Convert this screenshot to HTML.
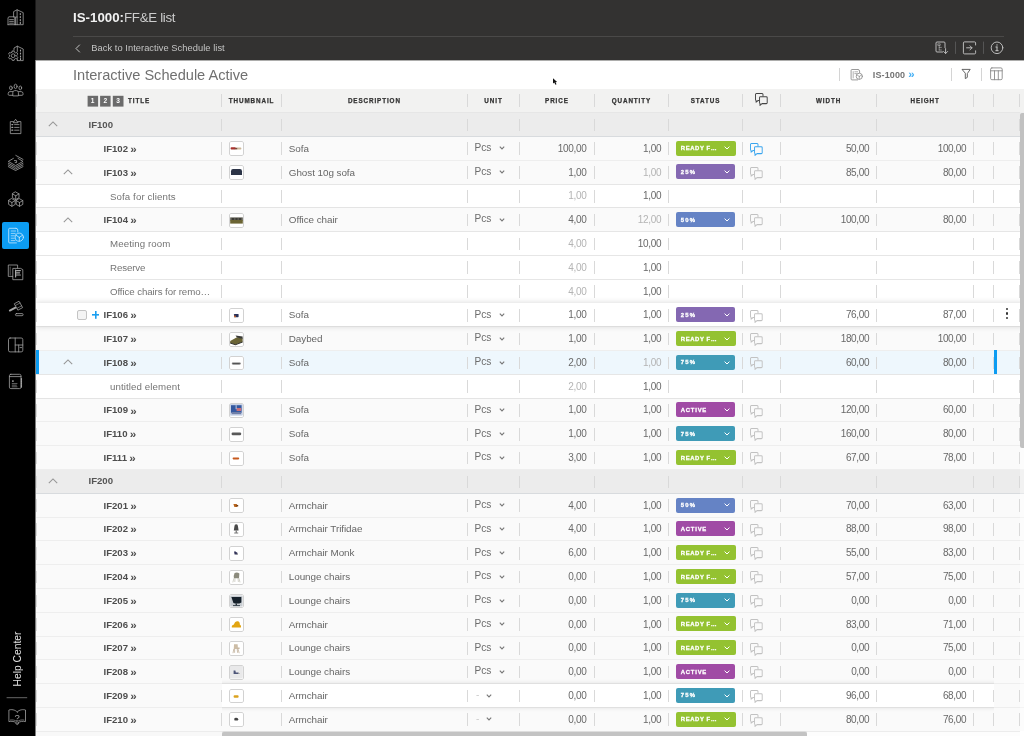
<!DOCTYPE html>
<html><head><meta charset="utf-8"><title>IS-1000: FF&amp;E list</title>
<style>
*{box-sizing:border-box;margin:0;padding:0}
html,body{width:1024px;height:736px;overflow:hidden;background:#fff;font-family:"Liberation Sans",sans-serif;}
body{position:relative}
body>*{will-change:transform}
#side{position:absolute;left:0;top:0;width:35px;height:736px;background:#000}
#sico{position:absolute;left:0;top:0}
#tico{position:absolute;left:0;top:0;z-index:5}
#side .act{position:absolute;left:2px;top:222px;width:27px;height:27px;background:#0c9cf2;border-radius:2px}
#help{position:absolute;left:-13.2px;top:652px;width:62px;height:14px;transform:rotate(-90deg);transform-origin:center;color:#e2e2e2;font-size:10.3px;text-align:center;line-height:14px;white-space:nowrap}
#top{position:absolute;left:36px;top:0;width:988px;height:61px;background:#333231}
#top .ttl{position:absolute;left:37px;top:9.4px;font-size:13.3px;color:#fff;white-space:nowrap;line-height:18px}
#top .ttl b{font-weight:700;color:#f2f2f2}
#top .ttl span{font-weight:400;color:#cdcdcd;letter-spacing:-0.3px}
#top .hr{position:absolute;left:37px;top:35.6px;width:930.5px;height:1px;background:#4a4948}
#top .back{position:absolute;left:55.3px;top:41.6px;font-size:9.3px;color:#c4c4c4;line-height:12px;white-space:nowrap;letter-spacing:.05px}
#sub{position:absolute;left:36px;top:61px;width:988px;height:28px;background:#fff}
#sub .h{position:absolute;left:37px;top:5px;font-size:14.6px;line-height:18px;color:#707070;white-space:nowrap;letter-spacing:0}
#sub .is{position:absolute;left:836.8px;top:6.8px;font-size:9px;letter-spacing:.12px;font-weight:700;color:#737373;line-height:12px;white-space:nowrap}
#sub .is b{color:#45b0f5;font-size:11.5px;font-weight:700;margin-left:.5px}
.vs{position:absolute;width:1px;background:#d4d4d4}
#thead{position:absolute;left:36px;top:89px;width:988px;height:23.2px;background:#f2f2f1}
#thead .hl{position:absolute;top:6.9px;font-size:6.3px;font-weight:700;letter-spacing:.9px;color:#333;line-height:9px;white-space:nowrap;-webkit-text-stroke:.25px #333}
#thead .hl.c{text-align:center}
#thead .lv{position:absolute;top:7px;width:10.4px;height:10.4px;background:#6a6a6a;color:#fff;font-size:6.5px;font-weight:700;text-align:center;line-height:10.4px}
.sep{position:absolute;top:6.5px;width:1px;height:12.6px;background:#d9d9d9}
#thead .sep{top:5px}
.row{position:absolute;left:36px;width:988px;height:23.79px;box-shadow:inset 0 1px 0 #eeeeee;white-space:nowrap}
.row.itm{background:#fafafa}
.row.sub{background:#fff;box-shadow:inset 0 1px 0 #e6e6e6}
.row.sub+.row.itm{box-shadow:inset 0 1px 0 #e4e4e4}
.row.ag{box-shadow:inset 0 1px 0 #d8dbde}
.row.first{box-shadow:inset 0 1px 0 #e6e6e6}
.row.grp{background:#ececec}
.row.sel{background:#eef7fd}
#rows .row.hov{background:#fff;box-shadow:0 0 6px rgba(0,0,0,.17);z-index:2}
.chu{position:absolute;top:9.3px}
.gt{position:absolute;left:52.5px;top:6.35px;font-size:9.6px;font-weight:700;color:#555;line-height:12px}
.it{position:absolute;left:67.5px;top:6.75px;font-size:9.6px;font-weight:700;color:#4e4e4e;line-height:12px}
.it .rq{font-weight:700;font-size:11.6px;line-height:10px;color:#4e4e4e;margin-left:-.4px;position:relative;top:1.1px}
.stt{position:absolute;left:74px;top:7.25px;font-size:9.7px;letter-spacing:.1px;color:#747474;line-height:12px}
.th{position:absolute;left:193.3px;top:5.5px;width:14.8px;height:14.8px;border-radius:2px;background:#fff;overflow:hidden}
.th svg{position:absolute;left:0;top:0}
.th:after{content:"";position:absolute;left:0;top:0;right:0;bottom:0;border:1px solid #d2d2d2;border-radius:2px}
.ds{position:absolute;left:252.8px;top:6.75px;font-size:9.9px;letter-spacing:-.06px;color:#666;line-height:12px}
.un{position:absolute;left:438.5px;top:6.10px;font-size:10.1px;color:#6c6c6c;line-height:12px}
.un.dash{color:#ccc;left:440px}
.uc{position:absolute;left:462.6px;top:10.5px}
.uc2{left:450px}
.num{position:absolute;top:6.80px;font-size:10px;letter-spacing:-.32px;line-height:12px}
.num.dark{color:#696969}
.num.grey{color:#b4b4b4}
.bd{position:absolute;left:639.5px;top:4.7px;height:15px;border-radius:2px;color:#fff}
.bd span{position:absolute;left:5.3px;top:3.65px;font-size:5.9px;font-weight:700;line-height:8px;-webkit-text-stroke:.3px #fff}
.bd svg{position:absolute;left:48.5px;top:5.8px}
.cmt{position:absolute;left:714px;top:7.0px}
.hcmt{position:absolute;left:718.8px;top:3.7px}
.cb{position:absolute;left:41.2px;top:7.2px;width:10px;height:10px;border:1px solid #c4c4c4;border-radius:2px;background:#f4f4f4}
.plus{position:absolute;left:55.6px;top:8.6px;width:7.6px;height:7.6px;background:linear-gradient(#1a9ef0,#1a9ef0) 50% 50%/100% 1.6px no-repeat,linear-gradient(#1a9ef0,#1a9ef0) 50% 50%/1.6px 100% no-repeat}
.dots{position:absolute;left:969.7px;top:5.3px;width:3px}
.dots i{display:block;width:2.2px;height:2.2px;border-radius:50%;background:#333;margin-bottom:2.4px}
.lbar{position:absolute;left:0;top:0;width:2.5px;height:23.79px;background:#0c9cf2}
.rbar{position:absolute;left:958.2px;top:0;width:2.5px;height:23.79px;background:#0c9cf2}
.whtclip{position:absolute;left:185.5px;top:-7px;width:772px;height:38px;overflow:hidden}
.whtbg{position:absolute;left:-10px;top:8.3px;width:792px;height:22.6px;background:#fff;box-shadow:0 0 5px rgba(0,0,0,.14)}
.row.wht{z-index:1}
#vsb{position:absolute;left:1020px;top:112px;width:4px;height:624px;background:rgba(255,255,255,.35);z-index:4}
#vsb i{position:absolute;left:.4px;top:1px;width:4px;height:335px;background:#c1c1c1;border-radius:2px 0 0 2px}
#hsb{position:absolute;left:221.7px;top:731px;width:798px;height:5px;background:linear-gradient(#ececec 0 1px,#fdfdfd 1px)}
#hsb i{position:absolute;left:0;top:1px;width:585px;height:4px;background:#c3c3c3;border-radius:2px 2px 0 0;box-shadow:0 -1px 0 #dedede}
</style></head><body>
<div id="side">
<div class="act"></div>
<svg id="sico" width="36" height="736" viewBox="0 0 36 736" fill="none" stroke="#a6a6a6" stroke-width="0.78" stroke-linejoin="round" stroke-linecap="round">
<!-- 1 buildings -->
<g>
<path d="M13.6 17 V11.6 L17.1 9.8 L23.2 12.6 V24.7 H8"/>
<path d="M17.1 9.8 V24.7"/>
<path d="M8 24.7 V17.6 L9 16.8 H14.8 V24.7"/>
<path d="M15.4 24.7 V17 H17.1"/>
<path d="M9.6 19.6 H13.4 M9.6 21.4 H13.4 M9.6 23.2 H13.4"/>
<path d="M20.3 13.6 V14.6 M20.3 16.6 V17.6 M20.3 19.6 V20.6 M20.3 22.4 V23.4" stroke-width="1.1"/>
</g>
<!-- 2 gear building -->
<g>
<path d="M14 50.2 V48 L17.3 46.2 L23.2 49 V60.6 H17.5"/>
<path d="M17.3 46.2 V51.5 M17.3 59 V60.6"/>
<path d="M20.5 50 V51 M20.5 53 V54 M20.5 56 V57 M20.5 58.6 V59.4" stroke-width="1.1"/>
<circle cx="13.2" cy="55.7" r="1.9"/>
<path d="M12.3 51 H14.1 L14.5 52.3 L15.6 52.9 L16.9 52.5 L17.8 54.1 L16.8 55 V56.3 L17.8 57.3 L16.9 58.9 L15.6 58.5 L14.5 59.1 L14.1 60.4 H12.3 L11.9 59.1 L10.8 58.5 L9.5 58.9 L8.6 57.3 L9.6 56.3 V55 L8.6 54.1 L9.5 52.5 L10.8 52.9 L11.9 52.3 Z"/>
</g>
<!-- 3 people -->
<g>
<ellipse cx="15.6" cy="86.4" rx="1.5" ry="2.2"/>
<ellipse cx="10.9" cy="87.9" rx="1.35" ry="1.9"/>
<ellipse cx="20.3" cy="87.9" rx="1.35" ry="1.9"/>
<path d="M12.8 95.5 V92.6 Q12.8 90.6 14.8 90.6 H16.4 Q18.4 90.6 18.4 92.6 V95.5 Z"/>
<path d="M12.6 91.6 H10 Q8.2 91.8 8.2 93.4 V94.4 Q8.2 95.3 9.2 95.3 H12.6"/>
<path d="M18.6 91.6 H21.2 Q23 91.8 23 93.4 V94.4 Q23 95.3 22 95.3 H18.6"/>
</g>
<!-- 4 clipboard -->
<g>
<path d="M13.4 121.6 H10.3 V133.6 H20.9 V121.6 H17.8"/>
<path d="M13.4 122.4 L15.6 119.3 L17.8 122.4 Z"/>
<path d="M14.6 124.6 H19 M14.6 127.4 H19 M14.6 130.2 H19"/>
<path d="M11.9 124.6 H12.7 M11.9 127.4 H12.7 M11.9 130.2 H12.7" stroke-width="1.3"/>
</g>
<!-- 5 layers -->
<g>
<path d="M13.4 158.4 L8.3 161.4 L15.6 165.6 L23 161.4 L18 158.4"/>
<path d="M15.8 155.4 L23 159.4"/>
<path d="M14.4 160.6 H16.6 V162.6 H15.2" stroke-width="0.8"/>
<path d="M8.3 163.2 L15.6 167.3 L23 163.2"/>
<path d="M8.3 164.9 L15.6 168.9 L23 164.9"/>
<path d="M8.3 166.6 L15.6 170.5 L23 166.6"/>
</g>
<!-- 6 cubes -->
<g>
<path d="M15.7 192 L19 193.9 V197.7 L15.7 199.6 L12.4 197.7 V193.9 Z M12.4 193.9 L15.7 195.8 L19 193.9 M15.7 195.8 V199.6"/>
<path d="M11.9 198.7 L15.2 200.6 V204.4 L11.9 206.3 L8.6 204.4 V200.6 Z M8.6 200.6 L11.9 202.5 L15.2 200.6 M11.9 202.5 V206.3"/>
<path d="M19.5 198.7 L22.8 200.6 V204.4 L19.5 206.3 L16.2 204.4 V200.6 Z M16.2 200.6 L19.5 202.5 L22.8 200.6 M19.5 202.5 V206.3"/>
</g>
<!-- 7 active doc + cube -->
<g stroke="#cfeafc">
<path d="M16 228.3 H9.6 Q8.7 228.3 8.7 229.2 V242 Q8.7 242.9 9.6 242.9 H16.4 M17.8 232 V230 Q17.8 228.3 16 228.3"/>
<path d="M11.2 231 H15.6 M11.2 233.4 H15.2 M11.2 235.8 H14.4 M11.2 238.2 H14.4 M11.2 240.6 H15" stroke-width="0.7"/>
<circle cx="19.3" cy="237.2" r="4.1" fill="#0c9cf2"/>
<path d="M19.3 237.4 V241.2 M19.3 237.4 L16 235.2 M19.3 237.4 L22.6 235.2"/>
</g>
<!-- 8 docs -->
<g>
<path d="M12.6 276.4 H8.3 V265 H17.6 V268"/>
<path d="M10.2 267 V275" stroke-width="0.6" stroke="#888"/>
<path d="M13.2 268.4 H20.6 L22.8 269.6 V279.7 H13.2 Z" />
<path d="M15.6 270.2 V277 M16.6 270.6 H20.4 M16.6 272.8 H19.6 M16.6 275 H20.4" stroke-width="1.2"/>
</g>
<!-- 9 gavel -->
<g>
<path d="M14.6 303.6 L19 301.2 L22.6 307.6 L18.2 310 Z"/>
<path d="M15.6 305.4 L20 303 M17.2 308.2 L21.6 305.8" stroke-width="0.6"/>
<path d="M15.4 307.6 L9.8 310.6" stroke-width="1.8"/>
<rect x="15.4" y="313.6" width="7.7" height="2.1" rx="1"/>
</g>
<!-- 10 layout -->
<g>
<rect x="8.5" y="338" width="14.3" height="13.9" rx="1.6"/>
<path d="M15.2 338 V351.9 M15.2 345 H22.8 M18.7 345 V351.9 M20 347.6 H21.6" />
</g>
<!-- 11 notebook -->
<g>
<rect x="9.4" y="374.3" width="11.6" height="14.3" rx="1.4"/>
<path d="M9.4 376.6 H21"/>
<path d="M21.4 378.6 V379.4 M21.4 380.6 V381.4 M21.4 382.6 V383.4 M21.4 384.6 V385.4 M21.4 386.4 V387" stroke-width="1.3"/>
<rect x="12.2" y="380.4" width="1.4" height="1.4" fill="#c4c4c4" stroke="none"/>
<path d="M12.2 383.6 H17 M12.2 385.2 H16.4 M12.2 386.8 H17" stroke-width="0.6"/>
</g>
<!-- help line -->
<path d="M7 697.7 H26.8" stroke="#666" stroke-width="1"/>
<!-- book -->
<g>
<path d="M17.2 712 C15 709.4 11 709.3 8.9 710 V721.6 C11 721 15 721.2 17.2 723.4 C19.4 721.2 23.4 721 25.5 721.6 V710 C23.4 709.3 19.4 709.4 17.2 712 Z"/>
<path d="M15.6 723.4 L17.2 724.6 L18.8 723.4"/>
<path d="M10.4 720 C12.6 719.6 15.2 720 17.2 721.8 C19.2 720 21.8 719.6 24 720" stroke-width=".6"/>
<text x="17.2" y="720.6" font-family="Liberation Sans, sans-serif" font-size="9.5" text-anchor="middle" fill="#a6a6a6" stroke="none">?</text>
</g>
</svg>

<div id="help">Help Center</div>
</div>
<div id="top">
<div class="ttl"><b>IS-1000:</b><span>FF&amp;E list</span></div>
<div class="hr"></div>
<svg style="position:absolute;left:39px;top:43.5px" width="6" height="9" viewBox="0 0 6 9"><path d="M4.8 0.7 L1 4.5 L4.8 8.3" fill="none" stroke="#c4c4c4" stroke-width="1"/></svg>
<div class="back">Back to Interactive Schedule list</div>
</div>
<div id="sub">
<div class="h">Interactive Schedule Active</div>
<i class="vs" style="left:803px;top:7px;height:13px"></i>
<div class="is">IS-1000 <b>»</b></div>
<i class="vs" style="left:915px;top:7px;height:13px"></i>
<i class="vs" style="left:944.5px;top:7px;height:13px"></i>
</div>
<div id="thead">
<i class="sep" style="left:0.10000000000000142px"></i><i class="sep" style="left:185.3px"></i><i class="sep" style="left:244.8px"></i><i class="sep" style="left:431px"></i><i class="sep" style="left:483px"></i><i class="sep" style="left:557.9px"></i><i class="sep" style="left:631.9px"></i><i class="sep" style="left:706.1px"></i><i class="sep" style="left:743.9px"></i><i class="sep" style="left:840.3px"></i><i class="sep" style="left:936.8px"></i><i class="sep" style="left:957.3px"></i><i class="sep" style="left:983px"></i>
<svg style="position:absolute;left:51px;top:6px" width="40" height="12" viewBox="0 0 40 12"><rect x=".6" y=".8" width="10.5" height="10.8" fill="#6b6b6b"/><rect x="13.1" y=".8" width="10.5" height="10.8" fill="#6b6b6b"/><rect x="25.8" y=".8" width="10.7" height="10.8" fill="#6b6b6b"/><g font-family="Liberation Sans, sans-serif" font-size="6.6" font-weight="700" fill="#fff" text-anchor="middle"><text x="5.7" y="8.4">1</text><text x="18.3" y="8.4">2</text><text x="31.1" y="8.4">3</text></g></svg>
<span class="hl" style="left:92px">TITLE</span>
<span class="hl c" style="left:185.8px;width:59.5px">THUMBNAIL</span>
<span class="hl c" style="left:245.3px;width:186.2px">DESCRIPTION</span>
<span class="hl c" style="left:431.5px;width:52.0px">UNIT</span>
<span class="hl c" style="left:483.5px;width:74.9px">PRICE</span>
<span class="hl c" style="left:558.4px;width:74.0px">QUANTITY</span>
<span class="hl c" style="left:632.4px;width:74.2px">STATUS</span>
<svg class="hcmt" width="13" height="13" viewBox="0 0 13 12" preserveAspectRatio="none" fill="none" stroke="#444" stroke-width="0.95" stroke-linejoin="round"><path d="M8 3.3 V1.4 a.9 .9 0 0 0 -.9 -.9 H1.4 a.9 .9 0 0 0 -.9 .9 V6 a.9 .9 0 0 0 .6 .85 V8.5 L3.1 6.9 H4.5"/><path d="M5.5 3.4 H11.3 a.9 .9 0 0 1 .9 .9 V8.9 a.9 .9 0 0 1 -.9 .9 H7 L5 11.5 V9.75 a.9 .9 0 0 1 -.45 -.85 V4.3 a.9 .9 0 0 1 .95 -.9 Z"/></svg>
<span class="hl c" style="left:744.4px;width:96.4px">WIDTH</span>
<span class="hl c" style="left:840.8px;width:96.5px">HEIGHT</span>
</div>
<div id="rows">
<div class="row grp first" style="top:112.20px"><i class="sep" style="left:0.10000000000000142px"></i><i class="sep" style="left:185.3px"></i><i class="sep" style="left:244.8px"></i><i class="sep" style="left:431px"></i><i class="sep" style="left:483px"></i><i class="sep" style="left:557.9px"></i><i class="sep" style="left:631.9px"></i><i class="sep" style="left:706.1px"></i><i class="sep" style="left:743.9px"></i><i class="sep" style="left:840.3px"></i><i class="sep" style="left:936.8px"></i><i class="sep" style="left:957.3px"></i><i class="sep" style="left:983px"></i><svg class="chu" style="left:12px" width="10" height="6" viewBox="0 0 10 6"><path d="M0.8 5.2 L5 1 L9.2 5.2" fill="none" stroke="#969696" stroke-width="1.05"/></svg><span class="gt">IF100</span></div>
<div class="row itm ag" style="top:135.99px"><i class="sep" style="left:0.10000000000000142px"></i><i class="sep" style="left:185.3px"></i><i class="sep" style="left:244.8px"></i><i class="sep" style="left:431px"></i><i class="sep" style="left:483px"></i><i class="sep" style="left:557.9px"></i><i class="sep" style="left:631.9px"></i><i class="sep" style="left:706.1px"></i><i class="sep" style="left:743.9px"></i><i class="sep" style="left:840.3px"></i><i class="sep" style="left:936.8px"></i><i class="sep" style="left:957.3px"></i><i class="sep" style="left:983px"></i><span class="it">IF102 <b class="rq">»</b></span><span class="th"><svg width="14.8" height="14.8" viewBox="0 0 14.8 14.8"><rect x="1.6" y="6.3" width="5.2" height="2.3" rx=".8" fill="#a8322d"/><rect x="6.8" y="6.6" width="5.6" height="2" rx=".8" fill="#cdb89a"/><rect x="5.8" y="6.9" width="2.4" height="1.4" fill="#7a4a3a"/></svg></span><span class="ds">Sofa</span><span class="un">Pcs</span><svg class="uc" width="6" height="4" viewBox="0 0 6 4"><path d="M0.8 0.7 L3 2.9 L5.2 0.7" fill="none" stroke="#7a7a7a" stroke-width="1.15"/></svg><span class="num dark" style="right:437.6px">100,00</span><span class="num dark" style="right:362.79999999999995px">1,00</span><span class="bd" style="background:#94c231;width:60.5px"><span style="letter-spacing:0.6px">READY F…</span><svg width="6" height="4" viewBox="0 0 6 4"><path d="M0.6 0.6 L3 3 L5.4 0.6" fill="none" stroke="#fff" stroke-width="1"/></svg></span><svg class="cmt" width="13" height="13" viewBox="0 0 13 12" preserveAspectRatio="none" fill="none" stroke="#3aa5ee" stroke-width="0.95" stroke-linejoin="round"><path d="M8 3.3 V1.4 a.9 .9 0 0 0 -.9 -.9 H1.4 a.9 .9 0 0 0 -.9 .9 V6 a.9 .9 0 0 0 .6 .85 V8.5 L3.1 6.9 H4.5"/><path d="M5.5 3.4 H11.3 a.9 .9 0 0 1 .9 .9 V8.9 a.9 .9 0 0 1 -.9 .9 H7 L5 11.5 V9.75 a.9 .9 0 0 1 -.45 -.85 V4.3 a.9 .9 0 0 1 .95 -.9 Z"/></svg><span class="num dark" style="right:154.70000000000005px">50,00</span><span class="num dark" style="right:57.700000000000045px">100,00</span></div>
<div class="row itm" style="top:159.78px"><i class="sep" style="left:0.10000000000000142px"></i><i class="sep" style="left:185.3px"></i><i class="sep" style="left:244.8px"></i><i class="sep" style="left:431px"></i><i class="sep" style="left:483px"></i><i class="sep" style="left:557.9px"></i><i class="sep" style="left:631.9px"></i><i class="sep" style="left:706.1px"></i><i class="sep" style="left:743.9px"></i><i class="sep" style="left:840.3px"></i><i class="sep" style="left:936.8px"></i><i class="sep" style="left:957.3px"></i><i class="sep" style="left:983px"></i><svg class="chu" style="left:27px" width="10" height="6" viewBox="0 0 10 6"><path d="M0.8 5.2 L5 1 L9.2 5.2" fill="none" stroke="#969696" stroke-width="1.05"/></svg><span class="it">IF103 <b class="rq">»</b></span><span class="th"><svg width="14.8" height="14.8" viewBox="0 0 14.8 14.8"><path d="M2 12.4 V8.6 Q2 6.4 4 6.4 H11 Q13 6.4 13 8.6 V12.4 Z" transform="translate(0,-2.4)" fill="#2c3447"/></svg></span><span class="ds">Ghost 10g sofa</span><span class="un">Pcs</span><svg class="uc" width="6" height="4" viewBox="0 0 6 4"><path d="M0.8 0.7 L3 2.9 L5.2 0.7" fill="none" stroke="#7a7a7a" stroke-width="1.15"/></svg><span class="num dark" style="right:437.6px">1,00</span><span class="num grey" style="right:362.79999999999995px">1,00</span><span class="bd" style="background:#8468b2;width:59.5px"><span style="letter-spacing:1.15px">25%</span><svg width="6" height="4" viewBox="0 0 6 4"><path d="M0.6 0.6 L3 3 L5.4 0.6" fill="none" stroke="#fff" stroke-width="1"/></svg></span><svg class="cmt" width="13" height="13" viewBox="0 0 13 12" preserveAspectRatio="none" fill="none" stroke="#c2c2c2" stroke-width="0.95" stroke-linejoin="round"><path d="M8 3.3 V1.4 a.9 .9 0 0 0 -.9 -.9 H1.4 a.9 .9 0 0 0 -.9 .9 V6 a.9 .9 0 0 0 .6 .85 V8.5 L3.1 6.9 H4.5"/><path d="M5.5 3.4 H11.3 a.9 .9 0 0 1 .9 .9 V8.9 a.9 .9 0 0 1 -.9 .9 H7 L5 11.5 V9.75 a.9 .9 0 0 1 -.45 -.85 V4.3 a.9 .9 0 0 1 .95 -.9 Z"/></svg><span class="num dark" style="right:154.70000000000005px">85,00</span><span class="num dark" style="right:57.700000000000045px">80,00</span></div>
<div class="row sub" style="top:183.57px"><i class="sep" style="left:0.10000000000000142px"></i><i class="sep" style="left:185.3px"></i><i class="sep" style="left:244.8px"></i><i class="sep" style="left:431px"></i><i class="sep" style="left:483px"></i><i class="sep" style="left:557.9px"></i><i class="sep" style="left:631.9px"></i><i class="sep" style="left:706.1px"></i><i class="sep" style="left:743.9px"></i><i class="sep" style="left:840.3px"></i><i class="sep" style="left:936.8px"></i><i class="sep" style="left:957.3px"></i><i class="sep" style="left:983px"></i><span class="stt">Sofa for clients</span><span class="num grey" style="right:437.6px">1,00</span><span class="num dark" style="right:362.79999999999995px">1,00</span></div>
<div class="row itm" style="top:207.36px"><i class="sep" style="left:0.10000000000000142px"></i><i class="sep" style="left:185.3px"></i><i class="sep" style="left:244.8px"></i><i class="sep" style="left:431px"></i><i class="sep" style="left:483px"></i><i class="sep" style="left:557.9px"></i><i class="sep" style="left:631.9px"></i><i class="sep" style="left:706.1px"></i><i class="sep" style="left:743.9px"></i><i class="sep" style="left:840.3px"></i><i class="sep" style="left:936.8px"></i><i class="sep" style="left:957.3px"></i><i class="sep" style="left:983px"></i><svg class="chu" style="left:27px" width="10" height="6" viewBox="0 0 10 6"><path d="M0.8 5.2 L5 1 L9.2 5.2" fill="none" stroke="#969696" stroke-width="1.05"/></svg><span class="it">IF104 <b class="rq">»</b></span><span class="th"><svg width="14.8" height="14.8" viewBox="0 0 14.8 14.8"><rect x="1.2" y="4.4" width="12.6" height="3.2" fill="#5b5a50"/><rect x="1.2" y="7" width="12.6" height="3.6" fill="#6b6433"/><rect x="3" y="5" width="2" height="2" fill="#3c3b35"/><rect x="6.5" y="5" width="2" height="2" fill="#3c3b35"/><rect x="10" y="5" width="2" height="2" fill="#3c3b35"/></svg></span><span class="ds">Office chair</span><span class="un">Pcs</span><svg class="uc" width="6" height="4" viewBox="0 0 6 4"><path d="M0.8 0.7 L3 2.9 L5.2 0.7" fill="none" stroke="#7a7a7a" stroke-width="1.15"/></svg><span class="num dark" style="right:437.6px">4,00</span><span class="num grey" style="right:362.79999999999995px">12,00</span><span class="bd" style="background:#6583c5;width:59.5px"><span style="letter-spacing:1.15px">50%</span><svg width="6" height="4" viewBox="0 0 6 4"><path d="M0.6 0.6 L3 3 L5.4 0.6" fill="none" stroke="#fff" stroke-width="1"/></svg></span><svg class="cmt" width="13" height="13" viewBox="0 0 13 12" preserveAspectRatio="none" fill="none" stroke="#c2c2c2" stroke-width="0.95" stroke-linejoin="round"><path d="M8 3.3 V1.4 a.9 .9 0 0 0 -.9 -.9 H1.4 a.9 .9 0 0 0 -.9 .9 V6 a.9 .9 0 0 0 .6 .85 V8.5 L3.1 6.9 H4.5"/><path d="M5.5 3.4 H11.3 a.9 .9 0 0 1 .9 .9 V8.9 a.9 .9 0 0 1 -.9 .9 H7 L5 11.5 V9.75 a.9 .9 0 0 1 -.45 -.85 V4.3 a.9 .9 0 0 1 .95 -.9 Z"/></svg><span class="num dark" style="right:154.70000000000005px">100,00</span><span class="num dark" style="right:57.700000000000045px">80,00</span></div>
<div class="row sub" style="top:231.15px"><i class="sep" style="left:0.10000000000000142px"></i><i class="sep" style="left:185.3px"></i><i class="sep" style="left:244.8px"></i><i class="sep" style="left:431px"></i><i class="sep" style="left:483px"></i><i class="sep" style="left:557.9px"></i><i class="sep" style="left:631.9px"></i><i class="sep" style="left:706.1px"></i><i class="sep" style="left:743.9px"></i><i class="sep" style="left:840.3px"></i><i class="sep" style="left:936.8px"></i><i class="sep" style="left:957.3px"></i><i class="sep" style="left:983px"></i><span class="stt">Meeting room</span><span class="num grey" style="right:437.6px">4,00</span><span class="num dark" style="right:362.79999999999995px">10,00</span></div>
<div class="row sub" style="top:254.94px"><i class="sep" style="left:0.10000000000000142px"></i><i class="sep" style="left:185.3px"></i><i class="sep" style="left:244.8px"></i><i class="sep" style="left:431px"></i><i class="sep" style="left:483px"></i><i class="sep" style="left:557.9px"></i><i class="sep" style="left:631.9px"></i><i class="sep" style="left:706.1px"></i><i class="sep" style="left:743.9px"></i><i class="sep" style="left:840.3px"></i><i class="sep" style="left:936.8px"></i><i class="sep" style="left:957.3px"></i><i class="sep" style="left:983px"></i><span class="stt" style="letter-spacing:-.1px">Reserve</span><span class="num grey" style="right:437.6px">4,00</span><span class="num dark" style="right:362.79999999999995px">1,00</span></div>
<div class="row sub" style="top:278.73px"><i class="sep" style="left:0.10000000000000142px"></i><i class="sep" style="left:185.3px"></i><i class="sep" style="left:244.8px"></i><i class="sep" style="left:431px"></i><i class="sep" style="left:483px"></i><i class="sep" style="left:557.9px"></i><i class="sep" style="left:631.9px"></i><i class="sep" style="left:706.1px"></i><i class="sep" style="left:743.9px"></i><i class="sep" style="left:840.3px"></i><i class="sep" style="left:936.8px"></i><i class="sep" style="left:957.3px"></i><i class="sep" style="left:983px"></i><span class="stt" style="letter-spacing:-.09px">Office chairs for remo…</span><span class="num grey" style="right:437.6px">4,00</span><span class="num dark" style="right:362.79999999999995px">1,00</span></div>
<div class="row itm hov" style="top:302.52px"><i class="sep" style="left:0.10000000000000142px"></i><i class="sep" style="left:185.3px"></i><i class="sep" style="left:244.8px"></i><i class="sep" style="left:431px"></i><i class="sep" style="left:483px"></i><i class="sep" style="left:557.9px"></i><i class="sep" style="left:631.9px"></i><i class="sep" style="left:706.1px"></i><i class="sep" style="left:743.9px"></i><i class="sep" style="left:840.3px"></i><i class="sep" style="left:936.8px"></i><i class="sep" style="left:957.3px"></i><i class="sep" style="left:983px"></i><i class="cb"></i><i class="plus"></i><span class="dots"><i></i><i></i><i></i></span><span class="it">IF106 <b class="rq">»</b></span><span class="th"><svg width="14.8" height="14.8" viewBox="0 0 14.8 14.8"><rect x="5" y="6" width="4.6" height="3.2" rx=".6" fill="#27305a"/><rect x="5" y="7.6" width="1.8" height="1.6" fill="#c8642a"/></svg></span><span class="ds">Sofa</span><span class="un">Pcs</span><svg class="uc" width="6" height="4" viewBox="0 0 6 4"><path d="M0.8 0.7 L3 2.9 L5.2 0.7" fill="none" stroke="#7a7a7a" stroke-width="1.15"/></svg><span class="num dark" style="right:437.6px">1,00</span><span class="num dark" style="right:362.79999999999995px">1,00</span><span class="bd" style="background:#8468b2;width:59.5px"><span style="letter-spacing:1.15px">25%</span><svg width="6" height="4" viewBox="0 0 6 4"><path d="M0.6 0.6 L3 3 L5.4 0.6" fill="none" stroke="#fff" stroke-width="1"/></svg></span><svg class="cmt" width="13" height="13" viewBox="0 0 13 12" preserveAspectRatio="none" fill="none" stroke="#c2c2c2" stroke-width="0.95" stroke-linejoin="round"><path d="M8 3.3 V1.4 a.9 .9 0 0 0 -.9 -.9 H1.4 a.9 .9 0 0 0 -.9 .9 V6 a.9 .9 0 0 0 .6 .85 V8.5 L3.1 6.9 H4.5"/><path d="M5.5 3.4 H11.3 a.9 .9 0 0 1 .9 .9 V8.9 a.9 .9 0 0 1 -.9 .9 H7 L5 11.5 V9.75 a.9 .9 0 0 1 -.45 -.85 V4.3 a.9 .9 0 0 1 .95 -.9 Z"/></svg><span class="num dark" style="right:154.70000000000005px">76,00</span><span class="num dark" style="right:57.700000000000045px">87,00</span></div>
<div class="row itm" style="top:326.31px"><i class="sep" style="left:0.10000000000000142px"></i><i class="sep" style="left:185.3px"></i><i class="sep" style="left:244.8px"></i><i class="sep" style="left:431px"></i><i class="sep" style="left:483px"></i><i class="sep" style="left:557.9px"></i><i class="sep" style="left:631.9px"></i><i class="sep" style="left:706.1px"></i><i class="sep" style="left:743.9px"></i><i class="sep" style="left:840.3px"></i><i class="sep" style="left:936.8px"></i><i class="sep" style="left:957.3px"></i><i class="sep" style="left:983px"></i><span class="it">IF107 <b class="rq">»</b></span><span class="th"><svg width="14.8" height="14.8" viewBox="0 0 14.8 14.8"><path d="M1.2 9 L8 5.2 L13.6 6.6 L13.6 10 L6.4 12.6 L1.2 11 Z" fill="#6a6436"/><path d="M6.5 3.6 L13.6 4.6 V7 L8 5.6 Z" fill="#3a3a36"/><path d="M1.2 10.6 L6.4 12.2 L13.6 9.6 V10.6 L6.4 13.2 L1.2 11.6 Z" fill="#2e2e2a"/></svg></span><span class="ds">Daybed</span><span class="un">Pcs</span><svg class="uc" width="6" height="4" viewBox="0 0 6 4"><path d="M0.8 0.7 L3 2.9 L5.2 0.7" fill="none" stroke="#7a7a7a" stroke-width="1.15"/></svg><span class="num dark" style="right:437.6px">1,00</span><span class="num dark" style="right:362.79999999999995px">1,00</span><span class="bd" style="background:#94c231;width:60.5px"><span style="letter-spacing:0.6px">READY F…</span><svg width="6" height="4" viewBox="0 0 6 4"><path d="M0.6 0.6 L3 3 L5.4 0.6" fill="none" stroke="#fff" stroke-width="1"/></svg></span><svg class="cmt" width="13" height="13" viewBox="0 0 13 12" preserveAspectRatio="none" fill="none" stroke="#c2c2c2" stroke-width="0.95" stroke-linejoin="round"><path d="M8 3.3 V1.4 a.9 .9 0 0 0 -.9 -.9 H1.4 a.9 .9 0 0 0 -.9 .9 V6 a.9 .9 0 0 0 .6 .85 V8.5 L3.1 6.9 H4.5"/><path d="M5.5 3.4 H11.3 a.9 .9 0 0 1 .9 .9 V8.9 a.9 .9 0 0 1 -.9 .9 H7 L5 11.5 V9.75 a.9 .9 0 0 1 -.45 -.85 V4.3 a.9 .9 0 0 1 .95 -.9 Z"/></svg><span class="num dark" style="right:154.70000000000005px">180,00</span><span class="num dark" style="right:57.700000000000045px">100,00</span></div>
<div class="row itm sel" style="top:350.10px"><i class="sep" style="left:0.10000000000000142px"></i><i class="sep" style="left:185.3px"></i><i class="sep" style="left:244.8px"></i><i class="sep" style="left:431px"></i><i class="sep" style="left:483px"></i><i class="sep" style="left:557.9px"></i><i class="sep" style="left:631.9px"></i><i class="sep" style="left:706.1px"></i><i class="sep" style="left:743.9px"></i><i class="sep" style="left:840.3px"></i><i class="sep" style="left:936.8px"></i><i class="sep" style="left:957.3px"></i><i class="sep" style="left:983px"></i><svg class="chu" style="left:27px" width="10" height="6" viewBox="0 0 10 6"><path d="M0.8 5.2 L5 1 L9.2 5.2" fill="none" stroke="#969696" stroke-width="1.05"/></svg><i class="lbar"></i><i class="rbar"></i><span class="it">IF108 <b class="rq">»</b></span><span class="th"><svg width="14.8" height="14.8" viewBox="0 0 14.8 14.8"><rect x="2.8" y="6.6" width="9" height="1.9" rx=".9" fill="#777"/><rect x="4" y="7" width="6.6" height="1.2" fill="#555"/></svg></span><span class="ds">Sofa</span><span class="un">Pcs</span><svg class="uc" width="6" height="4" viewBox="0 0 6 4"><path d="M0.8 0.7 L3 2.9 L5.2 0.7" fill="none" stroke="#7a7a7a" stroke-width="1.15"/></svg><span class="num dark" style="right:437.6px">2,00</span><span class="num grey" style="right:362.79999999999995px">1,00</span><span class="bd" style="background:#3f9bb7;width:59.5px"><span style="letter-spacing:1.15px">75%</span><svg width="6" height="4" viewBox="0 0 6 4"><path d="M0.6 0.6 L3 3 L5.4 0.6" fill="none" stroke="#fff" stroke-width="1"/></svg></span><svg class="cmt" width="13" height="13" viewBox="0 0 13 12" preserveAspectRatio="none" fill="none" stroke="#c2c2c2" stroke-width="0.95" stroke-linejoin="round"><path d="M8 3.3 V1.4 a.9 .9 0 0 0 -.9 -.9 H1.4 a.9 .9 0 0 0 -.9 .9 V6 a.9 .9 0 0 0 .6 .85 V8.5 L3.1 6.9 H4.5"/><path d="M5.5 3.4 H11.3 a.9 .9 0 0 1 .9 .9 V8.9 a.9 .9 0 0 1 -.9 .9 H7 L5 11.5 V9.75 a.9 .9 0 0 1 -.45 -.85 V4.3 a.9 .9 0 0 1 .95 -.9 Z"/></svg><span class="num dark" style="right:154.70000000000005px">60,00</span><span class="num dark" style="right:57.700000000000045px">80,00</span></div>
<div class="row sub" style="top:373.89px"><i class="sep" style="left:0.10000000000000142px"></i><i class="sep" style="left:185.3px"></i><i class="sep" style="left:244.8px"></i><i class="sep" style="left:431px"></i><i class="sep" style="left:483px"></i><i class="sep" style="left:557.9px"></i><i class="sep" style="left:631.9px"></i><i class="sep" style="left:706.1px"></i><i class="sep" style="left:743.9px"></i><i class="sep" style="left:840.3px"></i><i class="sep" style="left:936.8px"></i><i class="sep" style="left:957.3px"></i><i class="sep" style="left:983px"></i><span class="stt">untitled element</span><span class="num grey" style="right:437.6px">2,00</span><span class="num dark" style="right:362.79999999999995px">1,00</span></div>
<div class="row itm" style="top:397.68px"><i class="sep" style="left:0.10000000000000142px"></i><i class="sep" style="left:185.3px"></i><i class="sep" style="left:244.8px"></i><i class="sep" style="left:431px"></i><i class="sep" style="left:483px"></i><i class="sep" style="left:557.9px"></i><i class="sep" style="left:631.9px"></i><i class="sep" style="left:706.1px"></i><i class="sep" style="left:743.9px"></i><i class="sep" style="left:840.3px"></i><i class="sep" style="left:936.8px"></i><i class="sep" style="left:957.3px"></i><i class="sep" style="left:983px"></i><span class="it">IF109 <b class="rq">»</b></span><span class="th"><svg width="14.8" height="14.8" viewBox="0 0 14.8 14.8"><rect x=".8" y=".8" width="13" height="12" rx="1.4" fill="#c9d3e6"/><rect x="2" y="2.2" width="10.6" height="7.6" fill="#34589f"/><rect x="7.6" y="5" width="4.6" height="3" fill="#c9707a"/><rect x="2.6" y="9" width="9.6" height="2.2" fill="#6f7fa8"/><rect x="6.7" y="2.2" width=".8" height="4" fill="#dfe6f2"/></svg></span><span class="ds">Sofa</span><span class="un">Pcs</span><svg class="uc" width="6" height="4" viewBox="0 0 6 4"><path d="M0.8 0.7 L3 2.9 L5.2 0.7" fill="none" stroke="#7a7a7a" stroke-width="1.15"/></svg><span class="num dark" style="right:437.6px">1,00</span><span class="num dark" style="right:362.79999999999995px">1,00</span><span class="bd" style="background:#a04ba5;width:59.5px"><span style="letter-spacing:0.78px">ACTIVE</span><svg width="6" height="4" viewBox="0 0 6 4"><path d="M0.6 0.6 L3 3 L5.4 0.6" fill="none" stroke="#fff" stroke-width="1"/></svg></span><svg class="cmt" width="13" height="13" viewBox="0 0 13 12" preserveAspectRatio="none" fill="none" stroke="#c2c2c2" stroke-width="0.95" stroke-linejoin="round"><path d="M8 3.3 V1.4 a.9 .9 0 0 0 -.9 -.9 H1.4 a.9 .9 0 0 0 -.9 .9 V6 a.9 .9 0 0 0 .6 .85 V8.5 L3.1 6.9 H4.5"/><path d="M5.5 3.4 H11.3 a.9 .9 0 0 1 .9 .9 V8.9 a.9 .9 0 0 1 -.9 .9 H7 L5 11.5 V9.75 a.9 .9 0 0 1 -.45 -.85 V4.3 a.9 .9 0 0 1 .95 -.9 Z"/></svg><span class="num dark" style="right:154.70000000000005px">120,00</span><span class="num dark" style="right:57.700000000000045px">60,00</span></div>
<div class="row itm" style="top:421.47px"><i class="sep" style="left:0.10000000000000142px"></i><i class="sep" style="left:185.3px"></i><i class="sep" style="left:244.8px"></i><i class="sep" style="left:431px"></i><i class="sep" style="left:483px"></i><i class="sep" style="left:557.9px"></i><i class="sep" style="left:631.9px"></i><i class="sep" style="left:706.1px"></i><i class="sep" style="left:743.9px"></i><i class="sep" style="left:840.3px"></i><i class="sep" style="left:936.8px"></i><i class="sep" style="left:957.3px"></i><i class="sep" style="left:983px"></i><span class="it">IF110 <b class="rq">»</b></span><span class="th"><svg width="14.8" height="14.8" viewBox="0 0 14.8 14.8"><rect x="2.6" y="5.4" width="9.6" height="2.8" rx="1.2" fill="#5a5a5a"/></svg></span><span class="ds">Sofa</span><span class="un">Pcs</span><svg class="uc" width="6" height="4" viewBox="0 0 6 4"><path d="M0.8 0.7 L3 2.9 L5.2 0.7" fill="none" stroke="#7a7a7a" stroke-width="1.15"/></svg><span class="num dark" style="right:437.6px">1,00</span><span class="num dark" style="right:362.79999999999995px">1,00</span><span class="bd" style="background:#3f9bb7;width:59.5px"><span style="letter-spacing:1.15px">75%</span><svg width="6" height="4" viewBox="0 0 6 4"><path d="M0.6 0.6 L3 3 L5.4 0.6" fill="none" stroke="#fff" stroke-width="1"/></svg></span><svg class="cmt" width="13" height="13" viewBox="0 0 13 12" preserveAspectRatio="none" fill="none" stroke="#c2c2c2" stroke-width="0.95" stroke-linejoin="round"><path d="M8 3.3 V1.4 a.9 .9 0 0 0 -.9 -.9 H1.4 a.9 .9 0 0 0 -.9 .9 V6 a.9 .9 0 0 0 .6 .85 V8.5 L3.1 6.9 H4.5"/><path d="M5.5 3.4 H11.3 a.9 .9 0 0 1 .9 .9 V8.9 a.9 .9 0 0 1 -.9 .9 H7 L5 11.5 V9.75 a.9 .9 0 0 1 -.45 -.85 V4.3 a.9 .9 0 0 1 .95 -.9 Z"/></svg><span class="num dark" style="right:154.70000000000005px">160,00</span><span class="num dark" style="right:57.700000000000045px">80,00</span></div>
<div class="row itm" style="top:445.26px"><i class="sep" style="left:0.10000000000000142px"></i><i class="sep" style="left:185.3px"></i><i class="sep" style="left:244.8px"></i><i class="sep" style="left:431px"></i><i class="sep" style="left:483px"></i><i class="sep" style="left:557.9px"></i><i class="sep" style="left:631.9px"></i><i class="sep" style="left:706.1px"></i><i class="sep" style="left:743.9px"></i><i class="sep" style="left:840.3px"></i><i class="sep" style="left:936.8px"></i><i class="sep" style="left:957.3px"></i><i class="sep" style="left:983px"></i><span class="it">IF111 <b class="rq">»</b></span><span class="th"><svg width="14.8" height="14.8" viewBox="0 0 14.8 14.8"><rect x="3.6" y="6.5" width="6.6" height="1.9" rx=".8" fill="#c75a1e"/></svg></span><span class="ds">Sofa</span><span class="un">Pcs</span><svg class="uc" width="6" height="4" viewBox="0 0 6 4"><path d="M0.8 0.7 L3 2.9 L5.2 0.7" fill="none" stroke="#7a7a7a" stroke-width="1.15"/></svg><span class="num dark" style="right:437.6px">3,00</span><span class="num dark" style="right:362.79999999999995px">1,00</span><span class="bd" style="background:#94c231;width:60.5px"><span style="letter-spacing:0.6px">READY F…</span><svg width="6" height="4" viewBox="0 0 6 4"><path d="M0.6 0.6 L3 3 L5.4 0.6" fill="none" stroke="#fff" stroke-width="1"/></svg></span><svg class="cmt" width="13" height="13" viewBox="0 0 13 12" preserveAspectRatio="none" fill="none" stroke="#c2c2c2" stroke-width="0.95" stroke-linejoin="round"><path d="M8 3.3 V1.4 a.9 .9 0 0 0 -.9 -.9 H1.4 a.9 .9 0 0 0 -.9 .9 V6 a.9 .9 0 0 0 .6 .85 V8.5 L3.1 6.9 H4.5"/><path d="M5.5 3.4 H11.3 a.9 .9 0 0 1 .9 .9 V8.9 a.9 .9 0 0 1 -.9 .9 H7 L5 11.5 V9.75 a.9 .9 0 0 1 -.45 -.85 V4.3 a.9 .9 0 0 1 .95 -.9 Z"/></svg><span class="num dark" style="right:154.70000000000005px">67,00</span><span class="num dark" style="right:57.700000000000045px">78,00</span></div>
<div class="row grp" style="top:469.05px"><i class="sep" style="left:0.10000000000000142px"></i><i class="sep" style="left:185.3px"></i><i class="sep" style="left:244.8px"></i><i class="sep" style="left:431px"></i><i class="sep" style="left:483px"></i><i class="sep" style="left:557.9px"></i><i class="sep" style="left:631.9px"></i><i class="sep" style="left:706.1px"></i><i class="sep" style="left:743.9px"></i><i class="sep" style="left:840.3px"></i><i class="sep" style="left:936.8px"></i><i class="sep" style="left:957.3px"></i><i class="sep" style="left:983px"></i><svg class="chu" style="left:12px" width="10" height="6" viewBox="0 0 10 6"><path d="M0.8 5.2 L5 1 L9.2 5.2" fill="none" stroke="#969696" stroke-width="1.05"/></svg><span class="gt">IF200</span></div>
<div class="row itm ag" style="top:492.84px"><i class="sep" style="left:0.10000000000000142px"></i><i class="sep" style="left:185.3px"></i><i class="sep" style="left:244.8px"></i><i class="sep" style="left:431px"></i><i class="sep" style="left:483px"></i><i class="sep" style="left:557.9px"></i><i class="sep" style="left:631.9px"></i><i class="sep" style="left:706.1px"></i><i class="sep" style="left:743.9px"></i><i class="sep" style="left:840.3px"></i><i class="sep" style="left:936.8px"></i><i class="sep" style="left:957.3px"></i><i class="sep" style="left:983px"></i><span class="it">IF201 <b class="rq">»</b></span><span class="th"><svg width="14.8" height="14.8" viewBox="0 0 14.8 14.8"><path d="M4.4 6 H7.6 L8.8 7.4 L8 9 H5.4 Z" fill="#b8641c"/><rect x="7.4" y="7" width="1.8" height="1.4" fill="#6a3d1a"/></svg></span><span class="ds">Armchair</span><span class="un">Pcs</span><svg class="uc" width="6" height="4" viewBox="0 0 6 4"><path d="M0.8 0.7 L3 2.9 L5.2 0.7" fill="none" stroke="#7a7a7a" stroke-width="1.15"/></svg><span class="num dark" style="right:437.6px">4,00</span><span class="num dark" style="right:362.79999999999995px">1,00</span><span class="bd" style="background:#6583c5;width:59.5px"><span style="letter-spacing:1.15px">50%</span><svg width="6" height="4" viewBox="0 0 6 4"><path d="M0.6 0.6 L3 3 L5.4 0.6" fill="none" stroke="#fff" stroke-width="1"/></svg></span><svg class="cmt" width="13" height="13" viewBox="0 0 13 12" preserveAspectRatio="none" fill="none" stroke="#c2c2c2" stroke-width="0.95" stroke-linejoin="round"><path d="M8 3.3 V1.4 a.9 .9 0 0 0 -.9 -.9 H1.4 a.9 .9 0 0 0 -.9 .9 V6 a.9 .9 0 0 0 .6 .85 V8.5 L3.1 6.9 H4.5"/><path d="M5.5 3.4 H11.3 a.9 .9 0 0 1 .9 .9 V8.9 a.9 .9 0 0 1 -.9 .9 H7 L5 11.5 V9.75 a.9 .9 0 0 1 -.45 -.85 V4.3 a.9 .9 0 0 1 .95 -.9 Z"/></svg><span class="num dark" style="right:154.70000000000005px">70,00</span><span class="num dark" style="right:57.700000000000045px">63,00</span></div>
<div class="row itm" style="top:516.63px"><i class="sep" style="left:0.10000000000000142px"></i><i class="sep" style="left:185.3px"></i><i class="sep" style="left:244.8px"></i><i class="sep" style="left:431px"></i><i class="sep" style="left:483px"></i><i class="sep" style="left:557.9px"></i><i class="sep" style="left:631.9px"></i><i class="sep" style="left:706.1px"></i><i class="sep" style="left:743.9px"></i><i class="sep" style="left:840.3px"></i><i class="sep" style="left:936.8px"></i><i class="sep" style="left:957.3px"></i><i class="sep" style="left:983px"></i><span class="it">IF202 <b class="rq">»</b></span><span class="th"><svg width="14.8" height="14.8" viewBox="0 0 14.8 14.8"><path d="M5.4 4.6 Q5.4 2.2 7.2 2.2 Q9 2.2 9 4.6 L9.6 8.6 H4.8 Z" fill="#4a4a4a"/><rect x="6.7" y="8.6" width="1" height="2.2" fill="#555"/><rect x="5.2" y="10.6" width="4" height=".8" fill="#555"/></svg></span><span class="ds">Armchair Trifidae</span><span class="un">Pcs</span><svg class="uc" width="6" height="4" viewBox="0 0 6 4"><path d="M0.8 0.7 L3 2.9 L5.2 0.7" fill="none" stroke="#7a7a7a" stroke-width="1.15"/></svg><span class="num dark" style="right:437.6px">4,00</span><span class="num dark" style="right:362.79999999999995px">1,00</span><span class="bd" style="background:#a04ba5;width:59.5px"><span style="letter-spacing:0.78px">ACTIVE</span><svg width="6" height="4" viewBox="0 0 6 4"><path d="M0.6 0.6 L3 3 L5.4 0.6" fill="none" stroke="#fff" stroke-width="1"/></svg></span><svg class="cmt" width="13" height="13" viewBox="0 0 13 12" preserveAspectRatio="none" fill="none" stroke="#c2c2c2" stroke-width="0.95" stroke-linejoin="round"><path d="M8 3.3 V1.4 a.9 .9 0 0 0 -.9 -.9 H1.4 a.9 .9 0 0 0 -.9 .9 V6 a.9 .9 0 0 0 .6 .85 V8.5 L3.1 6.9 H4.5"/><path d="M5.5 3.4 H11.3 a.9 .9 0 0 1 .9 .9 V8.9 a.9 .9 0 0 1 -.9 .9 H7 L5 11.5 V9.75 a.9 .9 0 0 1 -.45 -.85 V4.3 a.9 .9 0 0 1 .95 -.9 Z"/></svg><span class="num dark" style="right:154.70000000000005px">88,00</span><span class="num dark" style="right:57.700000000000045px">98,00</span></div>
<div class="row itm" style="top:540.42px"><i class="sep" style="left:0.10000000000000142px"></i><i class="sep" style="left:185.3px"></i><i class="sep" style="left:244.8px"></i><i class="sep" style="left:431px"></i><i class="sep" style="left:483px"></i><i class="sep" style="left:557.9px"></i><i class="sep" style="left:631.9px"></i><i class="sep" style="left:706.1px"></i><i class="sep" style="left:743.9px"></i><i class="sep" style="left:840.3px"></i><i class="sep" style="left:936.8px"></i><i class="sep" style="left:957.3px"></i><i class="sep" style="left:983px"></i><span class="it">IF203 <b class="rq">»</b></span><span class="th"><svg width="14.8" height="14.8" viewBox="0 0 14.8 14.8"><path d="M5 5.4 H6.6 L8.6 7 L8 8.6 H5.6 Z" fill="#33345a"/><rect x="7.6" y="7.6" width="1.4" height="1" fill="#777"/></svg></span><span class="ds">Armchair Monk</span><span class="un">Pcs</span><svg class="uc" width="6" height="4" viewBox="0 0 6 4"><path d="M0.8 0.7 L3 2.9 L5.2 0.7" fill="none" stroke="#7a7a7a" stroke-width="1.15"/></svg><span class="num dark" style="right:437.6px">6,00</span><span class="num dark" style="right:362.79999999999995px">1,00</span><span class="bd" style="background:#94c231;width:60.5px"><span style="letter-spacing:0.6px">READY F…</span><svg width="6" height="4" viewBox="0 0 6 4"><path d="M0.6 0.6 L3 3 L5.4 0.6" fill="none" stroke="#fff" stroke-width="1"/></svg></span><svg class="cmt" width="13" height="13" viewBox="0 0 13 12" preserveAspectRatio="none" fill="none" stroke="#c2c2c2" stroke-width="0.95" stroke-linejoin="round"><path d="M8 3.3 V1.4 a.9 .9 0 0 0 -.9 -.9 H1.4 a.9 .9 0 0 0 -.9 .9 V6 a.9 .9 0 0 0 .6 .85 V8.5 L3.1 6.9 H4.5"/><path d="M5.5 3.4 H11.3 a.9 .9 0 0 1 .9 .9 V8.9 a.9 .9 0 0 1 -.9 .9 H7 L5 11.5 V9.75 a.9 .9 0 0 1 -.45 -.85 V4.3 a.9 .9 0 0 1 .95 -.9 Z"/></svg><span class="num dark" style="right:154.70000000000005px">55,00</span><span class="num dark" style="right:57.700000000000045px">83,00</span></div>
<div class="row itm" style="top:564.21px"><i class="sep" style="left:0.10000000000000142px"></i><i class="sep" style="left:185.3px"></i><i class="sep" style="left:244.8px"></i><i class="sep" style="left:431px"></i><i class="sep" style="left:483px"></i><i class="sep" style="left:557.9px"></i><i class="sep" style="left:631.9px"></i><i class="sep" style="left:706.1px"></i><i class="sep" style="left:743.9px"></i><i class="sep" style="left:840.3px"></i><i class="sep" style="left:936.8px"></i><i class="sep" style="left:957.3px"></i><i class="sep" style="left:983px"></i><span class="it">IF204 <b class="rq">»</b></span><span class="th"><svg width="14.8" height="14.8" viewBox="0 0 14.8 14.8"><path d="M5.6 3 Q8.4 2 10.4 3.6 L10 8.2 H5 Q4.4 5.4 5.6 3 Z" fill="#8b8a7c"/><path d="M5 8.2 L3.8 12.4 M10 8.2 L11 12.4 M6 8.2 L5.8 12 M9 8.2 L9.4 12" stroke="#b5b3a6" stroke-width=".6"/></svg></span><span class="ds">Lounge chairs</span><span class="un">Pcs</span><svg class="uc" width="6" height="4" viewBox="0 0 6 4"><path d="M0.8 0.7 L3 2.9 L5.2 0.7" fill="none" stroke="#7a7a7a" stroke-width="1.15"/></svg><span class="num dark" style="right:437.6px">0,00</span><span class="num dark" style="right:362.79999999999995px">1,00</span><span class="bd" style="background:#94c231;width:60.5px"><span style="letter-spacing:0.6px">READY F…</span><svg width="6" height="4" viewBox="0 0 6 4"><path d="M0.6 0.6 L3 3 L5.4 0.6" fill="none" stroke="#fff" stroke-width="1"/></svg></span><svg class="cmt" width="13" height="13" viewBox="0 0 13 12" preserveAspectRatio="none" fill="none" stroke="#c2c2c2" stroke-width="0.95" stroke-linejoin="round"><path d="M8 3.3 V1.4 a.9 .9 0 0 0 -.9 -.9 H1.4 a.9 .9 0 0 0 -.9 .9 V6 a.9 .9 0 0 0 .6 .85 V8.5 L3.1 6.9 H4.5"/><path d="M5.5 3.4 H11.3 a.9 .9 0 0 1 .9 .9 V8.9 a.9 .9 0 0 1 -.9 .9 H7 L5 11.5 V9.75 a.9 .9 0 0 1 -.45 -.85 V4.3 a.9 .9 0 0 1 .95 -.9 Z"/></svg><span class="num dark" style="right:154.70000000000005px">57,00</span><span class="num dark" style="right:57.700000000000045px">75,00</span></div>
<div class="row itm" style="top:588.00px"><i class="sep" style="left:0.10000000000000142px"></i><i class="sep" style="left:185.3px"></i><i class="sep" style="left:244.8px"></i><i class="sep" style="left:431px"></i><i class="sep" style="left:483px"></i><i class="sep" style="left:557.9px"></i><i class="sep" style="left:631.9px"></i><i class="sep" style="left:706.1px"></i><i class="sep" style="left:743.9px"></i><i class="sep" style="left:840.3px"></i><i class="sep" style="left:936.8px"></i><i class="sep" style="left:957.3px"></i><i class="sep" style="left:983px"></i><span class="it">IF205 <b class="rq">»</b></span><span class="th"><svg width="14.8" height="14.8" viewBox="0 0 14.8 14.8"><rect x="1.2" y="1.6" width="12.4" height="11" rx="1" fill="#c7ccd1"/><path d="M2.4 3 H12.4 V8.4 Q9 10.4 4.4 9 Z" fill="#16212b"/><rect x="6.6" y="9.4" width="1.4" height="2" fill="#26323c"/><rect x="4" y="11.2" width="7" height=".9" fill="#26323c"/></svg></span><span class="ds">Lounge chairs</span><span class="un">Pcs</span><svg class="uc" width="6" height="4" viewBox="0 0 6 4"><path d="M0.8 0.7 L3 2.9 L5.2 0.7" fill="none" stroke="#7a7a7a" stroke-width="1.15"/></svg><span class="num dark" style="right:437.6px">0,00</span><span class="num dark" style="right:362.79999999999995px">1,00</span><span class="bd" style="background:#3f9bb7;width:59.5px"><span style="letter-spacing:1.15px">75%</span><svg width="6" height="4" viewBox="0 0 6 4"><path d="M0.6 0.6 L3 3 L5.4 0.6" fill="none" stroke="#fff" stroke-width="1"/></svg></span><svg class="cmt" width="13" height="13" viewBox="0 0 13 12" preserveAspectRatio="none" fill="none" stroke="#c2c2c2" stroke-width="0.95" stroke-linejoin="round"><path d="M8 3.3 V1.4 a.9 .9 0 0 0 -.9 -.9 H1.4 a.9 .9 0 0 0 -.9 .9 V6 a.9 .9 0 0 0 .6 .85 V8.5 L3.1 6.9 H4.5"/><path d="M5.5 3.4 H11.3 a.9 .9 0 0 1 .9 .9 V8.9 a.9 .9 0 0 1 -.9 .9 H7 L5 11.5 V9.75 a.9 .9 0 0 1 -.45 -.85 V4.3 a.9 .9 0 0 1 .95 -.9 Z"/></svg><span class="num dark" style="right:154.70000000000005px">0,00</span><span class="num dark" style="right:57.700000000000045px">0,00</span></div>
<div class="row itm" style="top:611.79px"><i class="sep" style="left:0.10000000000000142px"></i><i class="sep" style="left:185.3px"></i><i class="sep" style="left:244.8px"></i><i class="sep" style="left:431px"></i><i class="sep" style="left:483px"></i><i class="sep" style="left:557.9px"></i><i class="sep" style="left:631.9px"></i><i class="sep" style="left:706.1px"></i><i class="sep" style="left:743.9px"></i><i class="sep" style="left:840.3px"></i><i class="sep" style="left:936.8px"></i><i class="sep" style="left:957.3px"></i><i class="sep" style="left:983px"></i><span class="it">IF206 <b class="rq">»</b></span><span class="th"><svg width="14.8" height="14.8" viewBox="0 0 14.8 14.8"><path d="M2.8 10.6 Q2.4 8 5 7.4 Q6 4 8.6 4.2 Q11 4.6 10.8 7.4 Q12.6 8.4 12 10.6 Z" fill="#e2a512"/></svg></span><span class="ds">Armchair</span><span class="un">Pcs</span><svg class="uc" width="6" height="4" viewBox="0 0 6 4"><path d="M0.8 0.7 L3 2.9 L5.2 0.7" fill="none" stroke="#7a7a7a" stroke-width="1.15"/></svg><span class="num dark" style="right:437.6px">0,00</span><span class="num dark" style="right:362.79999999999995px">1,00</span><span class="bd" style="background:#94c231;width:60.5px"><span style="letter-spacing:0.6px">READY F…</span><svg width="6" height="4" viewBox="0 0 6 4"><path d="M0.6 0.6 L3 3 L5.4 0.6" fill="none" stroke="#fff" stroke-width="1"/></svg></span><svg class="cmt" width="13" height="13" viewBox="0 0 13 12" preserveAspectRatio="none" fill="none" stroke="#c2c2c2" stroke-width="0.95" stroke-linejoin="round"><path d="M8 3.3 V1.4 a.9 .9 0 0 0 -.9 -.9 H1.4 a.9 .9 0 0 0 -.9 .9 V6 a.9 .9 0 0 0 .6 .85 V8.5 L3.1 6.9 H4.5"/><path d="M5.5 3.4 H11.3 a.9 .9 0 0 1 .9 .9 V8.9 a.9 .9 0 0 1 -.9 .9 H7 L5 11.5 V9.75 a.9 .9 0 0 1 -.45 -.85 V4.3 a.9 .9 0 0 1 .95 -.9 Z"/></svg><span class="num dark" style="right:154.70000000000005px">83,00</span><span class="num dark" style="right:57.700000000000045px">71,00</span></div>
<div class="row itm" style="top:635.58px"><i class="sep" style="left:0.10000000000000142px"></i><i class="sep" style="left:185.3px"></i><i class="sep" style="left:244.8px"></i><i class="sep" style="left:431px"></i><i class="sep" style="left:483px"></i><i class="sep" style="left:557.9px"></i><i class="sep" style="left:631.9px"></i><i class="sep" style="left:706.1px"></i><i class="sep" style="left:743.9px"></i><i class="sep" style="left:840.3px"></i><i class="sep" style="left:936.8px"></i><i class="sep" style="left:957.3px"></i><i class="sep" style="left:983px"></i><span class="it">IF207 <b class="rq">»</b></span><span class="th"><svg width="14.8" height="14.8" viewBox="0 0 14.8 14.8"><path d="M5 3.2 H8.6 L9 8 H4.8 Z" fill="#cdbda6"/><path d="M4.8 8 L4 12.2 M9 8 L10.2 12.2 M5.6 8 V11.8 M8.2 8 L8.6 11.8" stroke="#b8a58c" stroke-width=".7"/><rect x="8.6" y="6.6" width="2" height="1.2" fill="#b8a58c"/></svg></span><span class="ds">Lounge chairs</span><span class="un">Pcs</span><svg class="uc" width="6" height="4" viewBox="0 0 6 4"><path d="M0.8 0.7 L3 2.9 L5.2 0.7" fill="none" stroke="#7a7a7a" stroke-width="1.15"/></svg><span class="num dark" style="right:437.6px">0,00</span><span class="num dark" style="right:362.79999999999995px">1,00</span><span class="bd" style="background:#94c231;width:60.5px"><span style="letter-spacing:0.6px">READY F…</span><svg width="6" height="4" viewBox="0 0 6 4"><path d="M0.6 0.6 L3 3 L5.4 0.6" fill="none" stroke="#fff" stroke-width="1"/></svg></span><svg class="cmt" width="13" height="13" viewBox="0 0 13 12" preserveAspectRatio="none" fill="none" stroke="#c2c2c2" stroke-width="0.95" stroke-linejoin="round"><path d="M8 3.3 V1.4 a.9 .9 0 0 0 -.9 -.9 H1.4 a.9 .9 0 0 0 -.9 .9 V6 a.9 .9 0 0 0 .6 .85 V8.5 L3.1 6.9 H4.5"/><path d="M5.5 3.4 H11.3 a.9 .9 0 0 1 .9 .9 V8.9 a.9 .9 0 0 1 -.9 .9 H7 L5 11.5 V9.75 a.9 .9 0 0 1 -.45 -.85 V4.3 a.9 .9 0 0 1 .95 -.9 Z"/></svg><span class="num dark" style="right:154.70000000000005px">0,00</span><span class="num dark" style="right:57.700000000000045px">75,00</span></div>
<div class="row itm" style="top:659.37px"><i class="sep" style="left:0.10000000000000142px"></i><i class="sep" style="left:185.3px"></i><i class="sep" style="left:244.8px"></i><i class="sep" style="left:431px"></i><i class="sep" style="left:483px"></i><i class="sep" style="left:557.9px"></i><i class="sep" style="left:631.9px"></i><i class="sep" style="left:706.1px"></i><i class="sep" style="left:743.9px"></i><i class="sep" style="left:840.3px"></i><i class="sep" style="left:936.8px"></i><i class="sep" style="left:957.3px"></i><i class="sep" style="left:983px"></i><span class="it">IF208 <b class="rq">»</b></span><span class="th"><svg width="14.8" height="14.8" viewBox="0 0 14.8 14.8"><rect x=".8" y=".8" width="13" height="12.6" rx="1.4" fill="#e9e9ea"/><path d="M4.6 5.4 H6.4 L6.8 7.6 H9.6 V9 H4.6 Z" fill="#4d5578"/><rect x="9" y="8" width="1.6" height="1" fill="#999"/></svg></span><span class="ds">Lounge chairs</span><span class="un">Pcs</span><svg class="uc" width="6" height="4" viewBox="0 0 6 4"><path d="M0.8 0.7 L3 2.9 L5.2 0.7" fill="none" stroke="#7a7a7a" stroke-width="1.15"/></svg><span class="num dark" style="right:437.6px">0,00</span><span class="num dark" style="right:362.79999999999995px">1,00</span><span class="bd" style="background:#a04ba5;width:59.5px"><span style="letter-spacing:0.78px">ACTIVE</span><svg width="6" height="4" viewBox="0 0 6 4"><path d="M0.6 0.6 L3 3 L5.4 0.6" fill="none" stroke="#fff" stroke-width="1"/></svg></span><svg class="cmt" width="13" height="13" viewBox="0 0 13 12" preserveAspectRatio="none" fill="none" stroke="#c2c2c2" stroke-width="0.95" stroke-linejoin="round"><path d="M8 3.3 V1.4 a.9 .9 0 0 0 -.9 -.9 H1.4 a.9 .9 0 0 0 -.9 .9 V6 a.9 .9 0 0 0 .6 .85 V8.5 L3.1 6.9 H4.5"/><path d="M5.5 3.4 H11.3 a.9 .9 0 0 1 .9 .9 V8.9 a.9 .9 0 0 1 -.9 .9 H7 L5 11.5 V9.75 a.9 .9 0 0 1 -.45 -.85 V4.3 a.9 .9 0 0 1 .95 -.9 Z"/></svg><span class="num dark" style="right:154.70000000000005px">0,00</span><span class="num dark" style="right:57.700000000000045px">0,00</span></div>
<div class="row itm wht" style="top:683.16px"><i class="whtclip"><i class="whtbg"></i></i><i class="sep" style="left:0.10000000000000142px"></i><i class="sep" style="left:185.3px"></i><i class="sep" style="left:244.8px"></i><i class="sep" style="left:431px"></i><i class="sep" style="left:483px"></i><i class="sep" style="left:557.9px"></i><i class="sep" style="left:631.9px"></i><i class="sep" style="left:706.1px"></i><i class="sep" style="left:743.9px"></i><i class="sep" style="left:840.3px"></i><i class="sep" style="left:936.8px"></i><i class="sep" style="left:957.3px"></i><i class="sep" style="left:983px"></i><span class="it">IF209 <b class="rq">»</b></span><span class="th"><svg width="14.8" height="14.8" viewBox="0 0 14.8 14.8"><rect x="4.6" y="6.2" width="5" height="2.6" rx="1" fill="#dba21e"/></svg></span><span class="ds">Armchair</span><span class="un dash">-</span><svg class="uc uc2" width="6" height="4" viewBox="0 0 6 4"><path d="M0.8 0.7 L3 2.9 L5.2 0.7" fill="none" stroke="#7a7a7a" stroke-width="1.15"/></svg><span class="num dark" style="right:437.6px">0,00</span><span class="num dark" style="right:362.79999999999995px">1,00</span><span class="bd" style="background:#3f9bb7;width:59.5px"><span style="letter-spacing:1.15px">75%</span><svg width="6" height="4" viewBox="0 0 6 4"><path d="M0.6 0.6 L3 3 L5.4 0.6" fill="none" stroke="#fff" stroke-width="1"/></svg></span><svg class="cmt" width="13" height="13" viewBox="0 0 13 12" preserveAspectRatio="none" fill="none" stroke="#c2c2c2" stroke-width="0.95" stroke-linejoin="round"><path d="M8 3.3 V1.4 a.9 .9 0 0 0 -.9 -.9 H1.4 a.9 .9 0 0 0 -.9 .9 V6 a.9 .9 0 0 0 .6 .85 V8.5 L3.1 6.9 H4.5"/><path d="M5.5 3.4 H11.3 a.9 .9 0 0 1 .9 .9 V8.9 a.9 .9 0 0 1 -.9 .9 H7 L5 11.5 V9.75 a.9 .9 0 0 1 -.45 -.85 V4.3 a.9 .9 0 0 1 .95 -.9 Z"/></svg><span class="num dark" style="right:154.70000000000005px">96,00</span><span class="num dark" style="right:57.700000000000045px">68,00</span></div>
<div class="row itm" style="top:706.95px"><i class="sep" style="left:0.10000000000000142px"></i><i class="sep" style="left:185.3px"></i><i class="sep" style="left:244.8px"></i><i class="sep" style="left:431px"></i><i class="sep" style="left:483px"></i><i class="sep" style="left:557.9px"></i><i class="sep" style="left:631.9px"></i><i class="sep" style="left:706.1px"></i><i class="sep" style="left:743.9px"></i><i class="sep" style="left:840.3px"></i><i class="sep" style="left:936.8px"></i><i class="sep" style="left:957.3px"></i><i class="sep" style="left:983px"></i><span class="it">IF210 <b class="rq">»</b></span><span class="th"><svg width="14.8" height="14.8" viewBox="0 0 14.8 14.8"><path d="M5.2 7 Q5.4 5.8 7 5.8 Q9 5.8 9.2 7.2 L8.8 8.6 H5.6 Z" fill="#444"/></svg></span><span class="ds">Armchair</span><span class="un dash">-</span><svg class="uc uc2" width="6" height="4" viewBox="0 0 6 4"><path d="M0.8 0.7 L3 2.9 L5.2 0.7" fill="none" stroke="#7a7a7a" stroke-width="1.15"/></svg><span class="num dark" style="right:437.6px">0,00</span><span class="num dark" style="right:362.79999999999995px">1,00</span><span class="bd" style="background:#94c231;width:60.5px"><span style="letter-spacing:0.6px">READY F…</span><svg width="6" height="4" viewBox="0 0 6 4"><path d="M0.6 0.6 L3 3 L5.4 0.6" fill="none" stroke="#fff" stroke-width="1"/></svg></span><svg class="cmt" width="13" height="13" viewBox="0 0 13 12" preserveAspectRatio="none" fill="none" stroke="#c2c2c2" stroke-width="0.95" stroke-linejoin="round"><path d="M8 3.3 V1.4 a.9 .9 0 0 0 -.9 -.9 H1.4 a.9 .9 0 0 0 -.9 .9 V6 a.9 .9 0 0 0 .6 .85 V8.5 L3.1 6.9 H4.5"/><path d="M5.5 3.4 H11.3 a.9 .9 0 0 1 .9 .9 V8.9 a.9 .9 0 0 1 -.9 .9 H7 L5 11.5 V9.75 a.9 .9 0 0 1 -.45 -.85 V4.3 a.9 .9 0 0 1 .95 -.9 Z"/></svg><span class="num dark" style="right:154.70000000000005px">80,00</span><span class="num dark" style="right:57.700000000000045px">76,00</span></div>
</div>
<svg id="tico" width="1024" height="90" viewBox="0 0 1024 90" fill="none" stroke="#c8c8c8" stroke-width="0.9" stroke-linejoin="round" stroke-linecap="round">
<!-- A doc w/ arrow -->
<path d="M942.6 52 H937 Q936 52 936 51 V43 Q936 42 937 42 H944 Q945 42 945 43 V47.6"/>
<rect x="938.2" y="43.8" width="2" height="1.6" stroke-width="0.55"/>
<path d="M939.2 45.4 V50 M939.2 47.4 H941.4 M939.2 50 H941.4" stroke-width="0.55"/>
<path d="M945.6 48.6 V53.4 M943.6 51.5 L945.6 53.5 L947.6 51.5"/>
<path d="M955.5 42 V53.5" stroke="#555" stroke-width="1"/>
<!-- B box arrow -->
<path d="M975.6 45 V43 Q975.6 41.9 974.5 41.9 H964.5 Q963.4 41.9 963.4 43 V52.8 Q963.4 53.9 964.5 53.9 H974.5 Q975.6 53.9 975.6 52.8 V50.8"/>
<path d="M966.6 47.8 H972 M970 45.8 L972 47.8 L970 49.8"/>
<path d="M983.5 42 V53.5" stroke="#555" stroke-width="1"/>
<!-- C info -->
<circle cx="997" cy="47.8" r="5.8"/>
<path d="M997 47 V50.6 M995.9 47 H997 M995.8 50.7 H998.2" stroke-width="1"/>
<circle cx="997" cy="44.9" r="0.7" fill="#c8c8c8" stroke="none"/>
<!-- sub doc icon -->
<g stroke="#909090">
<path d="M858 69.5 H852 Q851.1 69.5 851.1 70.4 V79 Q851.1 79.9 852 79.9 H857.6 M859.6 72.6 V71 Q859.6 69.5 858 69.5"/>
<path d="M853.2 71.6 V78" stroke-width="0.7"/>
<path d="M854.8 71.8 H857.6 M854.8 73.6 H856.6" stroke-width="0.7"/>
<circle cx="859.3" cy="76.3" r="3.1" fill="#fff"/>
<path d="M859.3 76.4 V79 M859.3 76.4 L857 75 M859.3 76.4 L861.6 75" stroke-width="0.7"/>
</g>
<!-- filter -->
<path d="M962.4 69.4 H970.2 L967.3 73.6 V77.4 L965.3 78.6 V73.6 Z" stroke="#555"/>
<!-- table -->
<g stroke="#8a8a8a">
<rect x="990.6" y="67.9" width="11.6" height="11.8" rx="1.3"/>
<path d="M990.6 70.8 H1002.2 M994.5 70.8 V79.7 M998.3 70.8 V79.7"/>
</g>
</svg>

<i style="position:absolute;left:35px;top:0;width:1px;height:60px;background:#1a1919;z-index:6"></i><i style="position:absolute;left:35px;top:60px;width:1px;height:676px;background:#7e7e7e;z-index:6"></i><i style="position:absolute;left:36px;top:60px;width:988px;height:1px;background:#adadac;z-index:5"></i>
<svg style="position:absolute;left:550px;top:76px;z-index:7" width="10" height="10" viewBox="550 76 10 10"><path d="M553 78.2 V83.6 L554.3 82.6 L555.4 84.7 L556.5 84.2 L555.5 82.2 L557.1 82 Z" fill="#111"/></svg>
<div id="vsb"><i></i></div>
<i style="position:absolute;left:36px;top:731px;width:186px;height:5px;background:linear-gradient(#ececec 0 1px,#f8f8f8 1px)"></i>
<div id="hsb"><i></i></div>
</body></html>
